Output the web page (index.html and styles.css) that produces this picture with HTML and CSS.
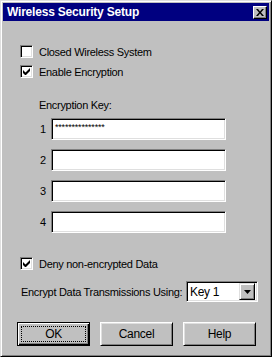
FILE: index.html
```html
<!DOCTYPE html>
<html lang="en">
<head>
    <meta charset="UTF-8">
    <title>Wireless Security Setup</title>
    <link rel="stylesheet" href="styles.css">
</head>
<body>
    <div class="window">
        <div class="title-bar">
            <span class="title">Wireless Security Setup</span>
            <div class="close-btn">
                <svg width="8" height="7" viewBox="0 0 8 7">
                    <path d="M0 0h2l2 2.5L6 0h2L5 3.5 8 7H6L4 4.5 2 7H0l3-3.5z" fill="#000"/>
                </svg>
            </div>
        </div>

        <div class="content">
            <label class="check-row first">
                <span class="checkbox"></span>
                <span>Closed Wireless System</span>
            </label>
            <label class="check-row">
                <span class="checkbox checked">
                    <svg width="7" height="7" viewBox="0 0 7 7">
                        <path d="M0 2v3l2 2h1l4-4V0L2.5 4.5z" fill="#000"/>
                    </svg>
                </span>
                <span>Enable Encryption</span>
            </label>

            <div class="key-group">
                <div class="key-label">Encryption Key:</div>
                <div class="key-row">
                    <span class="key-num">1</span>
                    <div class="field stars">***************</div>
                </div>
                <div class="key-row">
                    <span class="key-num">2</span>
                    <div class="field"></div>
                </div>
                <div class="key-row">
                    <span class="key-num">3</span>
                    <div class="field"></div>
                </div>
                <div class="key-row">
                    <span class="key-num">4</span>
                    <div class="field"></div>
                </div>
            </div>

            <label class="check-row deny">
                <span class="checkbox checked">
                    <svg width="7" height="7" viewBox="0 0 7 7">
                        <path d="M0 2v3l2 2h1l4-4V0L2.5 4.5z" fill="#000"/>
                    </svg>
                </span>
                <span>Deny non-encrypted Data</span>
            </label>

            <div class="transmit-row">
                <span class="transmit-label">Encrypt Data Transmissions Using:</span>
                <div class="select">
                    <span class="select-value">Key 1</span>
                    <div class="select-btn">
                        <svg width="7" height="4" viewBox="0 0 7 4">
                            <path d="M0 0h7L3.5 4z" fill="#000"/>
                        </svg>
                    </div>
                </div>
            </div>

            <div class="buttons">
                <div class="btn default"><span class="focus">OK</span></div>
                <div class="btn">Cancel</div>
                <div class="btn">Help</div>
            </div>
        </div>
    </div>
</body>
</html>
```

FILE: styles.css
```css
* {
    margin: 0;
    padding: 0;
    box-sizing: border-box;
}

body {
    font-family: 'Liberation Sans', Arial, sans-serif;
    font-size: 11px;
    letter-spacing: -0.3px;
    color: #000;
    background: #c0c0c0;
}

.window {
    width: 272px;
    height: 357px;
    background: #c0c0c0;
    border: 1px solid;
    border-color: #dfdfdf #000 #000 #dfdfdf;
    box-shadow: inset 1px 1px #fff, inset -1px -1px #808080;
    padding: 2px;
}

.title-bar {
    height: 18px;
    background: #000080;
    display: flex;
    align-items: center;
    justify-content: space-between;
    padding: 0 2px 0 4px;
}

.title {
    color: #fff;
    font-weight: 700;
    font-size: 12px;
    letter-spacing: -0.2px;
}

.close-btn {
    width: 14px;
    height: 13px;
    background: #c0c0c0;
    border: 1px solid;
    border-color: #fff #000 #000 #fff;
    box-shadow: inset -1px -1px #808080;
    display: flex;
    align-items: center;
    justify-content: center;
}

.content {
    padding-left: 17px;
}

.check-row {
    display: flex;
    align-items: center;
    gap: 6px;
    height: 13px;
    margin-top: 7px;
}

.check-row.first {
    margin-top: 24px;
}

.check-row.deny {
    margin-top: 24px;
}

.checkbox {
    width: 13px;
    height: 13px;
    background: #fff;
    border: 1px solid;
    border-color: #808080 #fff #fff #808080;
    box-shadow: inset 1px 1px #000, inset -1px -1px #dfdfdf;
    display: flex;
    align-items: center;
    justify-content: center;
}

.key-group {
    padding-left: 19px;
    margin-top: 21px;
}

.key-label {
    line-height: 13px;
    margin-bottom: 6px;
}

.key-row {
    display: flex;
    align-items: center;
    height: 22px;
    margin-bottom: 9px;
}

.key-num {
    width: 12px;
    padding-left: 1px;
}

.field {
    width: 175px;
    height: 22px;
    background: #fff;
    border: 1px solid;
    border-color: #808080 #fff #fff #808080;
    box-shadow: inset 1px 1px #000, inset -1px -1px #dfdfdf;
}

.stars {
    padding: 2px 0 0 3px;
    font-size: 9px;
    letter-spacing: -0.2px;
    line-height: 12px;
}

.transmit-row {
    display: flex;
    align-items: center;
    margin-top: 11px;
}

.transmit-label {
    width: 166px;
    padding-left: 1px;
}

.select {
    width: 72px;
    height: 21px;
    background: #fff;
    border: 1px solid;
    border-color: #808080 #fff #fff #808080;
    box-shadow: inset 1px 1px #000, inset -1px -1px #dfdfdf;
    display: flex;
    align-items: center;
    padding: 2px;
}

.select-value {
    flex: 1;
    padding-left: 1px;
    font-size: 12px;
}

.select-btn {
    width: 16px;
    height: 17px;
    background: #c0c0c0;
    border: 1px solid;
    border-color: #dfdfdf #000 #000 #dfdfdf;
    box-shadow: inset 1px 1px #fff, inset -1px -1px #808080;
    display: flex;
    align-items: center;
    justify-content: center;
}

.buttons {
    display: flex;
    gap: 10px;
    margin: 20px 0 0 -3px;
}

.btn {
    width: 73px;
    height: 24px;
    background: #c0c0c0;
    border: 1px solid;
    border-color: #fff #000 #000 #fff;
    box-shadow: inset 1px 1px #dfdfdf, inset -1px -1px #808080;
    display: flex;
    align-items: center;
    justify-content: center;
    font-size: 12px;
}

.btn.default {
    border: 1px solid #000;
    box-shadow: inset 1px 1px #fff, inset -1px -1px #000, inset -2px -2px #808080;
    padding: 3px;
}

.focus {
    width: 100%;
    height: 100%;
    border: 1px dotted #000;
    display: flex;
    align-items: center;
    justify-content: center;
}
```
